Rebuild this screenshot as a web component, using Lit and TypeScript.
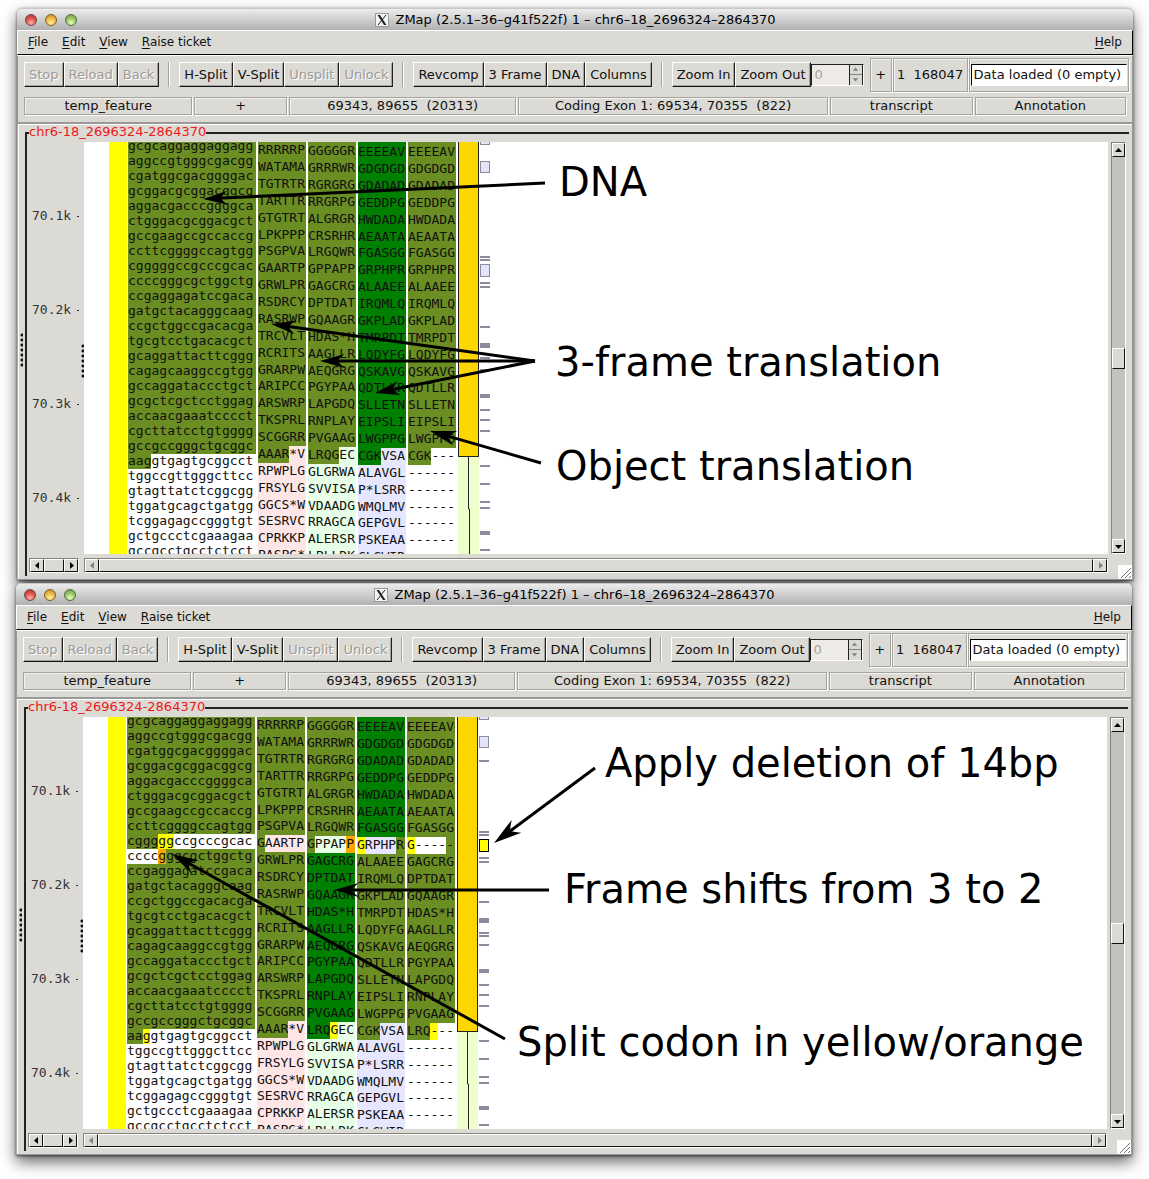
import { LitElement, html, svg, css } from "lit";
import { customElement, property } from "lit/decorators.js";
import { classMap } from "lit/directives/class-map.js";
import { styleMap } from "lit/directives/style-map.js";

type Run = [text: string, tone: string];
type Row = Run[];

const DNA = `gcgcaggaggaggagg aggccgtgggcgacgg cgatggcgacggggac gcggacgcggacggcg
aggacgacccggggca ctgggacgcggacgct gccgaagccgccaccg ccttcggggccagtgg cgggggccgcccgcac
ccccgggcgctggctg ccgaggagatccgaca gatgctacagggcaag ccgctggccgacacga tgcgtcctgacacgct
gcaggattacttcggg cagagcaaggccgtgg gccaggataccctgct gcgctcgctcctggag accaacgaaatcccct
cgcttatcctgtgggg gccgccgggctgcggc aaggtgagtgcggcct tggccgttgggcttcc gtagttatctcggcgg
tggatgcagctgatgg tcggagagccgggtgt gctgccctcgaaagaa gccgcctgcctctcct`.split(/\s+/);

const FRAME1 = `RRRRRP WATAMA TGTRTR TARTTR GTGTRT LPKPPP PSGPVA GAARTP GRWLPR RSDRCY
RASRWP TRCVLT RCRITS GRARPW ARIPCC ARSWRP TKSPRL SCGGRR AAAR*V RPWPLG FRSYLG GGCS*W
SESRVC CPRKKP PASPG*`.split(/\s+/);

const FRAME2 = `GGGGGR GRRRWR RGRGRG RRGRPG ALGRGR CRSRHR LRGQWR GPPAPP GAGCRG DPTDAT
GQAAGR HDAS*H AAGLLR AEQGRG PGYPAA LAPGDQ RNPLAY PVGAAG LRQGEC GLGRWA SVVISA VDAADG
RRAGCA ALERSR LPLLDK`.split(/\s+/);

const FRAME3 = `EEEEAV GDGDGD GDADAD GEDDPG HWDADA AEAATA FGASGG GRPHPR ALAAEE IRQMLQ
GKPLAD TMRPDT LQDYFG QSKAVG QDTLLR SLLETN EIPSLI LWGPPG CGKVSA ALAVGL P*LSRR WMQLMV
GEPGVL PSKEAA CLSWIR`.split(/\s+/);

const GAP_ROW = "------";

/** Gives rows[from..to) one tone each; overrides hold rows that mix tones. */
function paint(
  texts: string[],
  tones: [until: number, tone: string][],
  overrides: Record<number, Row> = {},
): Row[] {
  return texts.map((text, i) => {
    if (overrides[i]) return overrides[i];
    const tone = tones.find(([until]) => i < until)![1];
    return [[text, tone]];
  });
}

interface Track {
  kind: string;
  rows: Row[];
}

const BEFORE: Track[] = [
  { kind: "dna", rows: paint(DNA, [[21, "exon"], [99, "plain"]], { 21: [["aag", "exon"], ["gtgagtgcggcct", "plain"]] }) },
  { kind: "pep f1", rows: paint(FRAME1, [[18, "exon"], [99, "rose"]], { 18: [["AAAR", "exon"], ["*V", "rose"]] }) },
  { kind: "pep f2", rows: paint(FRAME2, [[18, "exon"], [99, "mint"]], { 18: [["LRQG", "exon"], ["EC", "mint"]] }) },
  { kind: "pep f3", rows: paint(FRAME3, [[18, "coding"], [99, "lilac"]], { 18: [["CGK", "coding"], ["VSA", "lilac"]] }) },
  {
    kind: "pep f3",
    rows: paint([...FRAME3.slice(0, 19), ...Array(6).fill(GAP_ROW)], [[18, "exon"], [99, "plain"]], {
      18: [["CGK", "exon"], ["---", "plain"]],
    }),
  },
];

const AFTER: Track[] = [
  {
    kind: "dna",
    rows: paint(DNA, [[21, "exon"], [99, "plain"]], {
      8: [["cggg", "exon"], ["gg", "split"], ["ccgcccgcac", "plain"]],
      9: [["cccc", "plain"], ["g", "splice"], ["ggcgctggctg", "exon"]],
      21: [["aa", "exon"], ["g", "split"], ["gtgagtgcggcct", "plain"]],
    }),
  },
  {
    kind: "pep f1",
    rows: paint(FRAME1, [[18, "exon"], [99, "rose"]], {
      7: [["G", "exon"], ["AARTP", "rose"]],
      18: [["AAAR", "exon"], ["*V", "rose"]],
    }),
  },
  {
    kind: "pep f2",
    rows: paint(FRAME2, [[7, "exon"], [18, "coding"], [99, "mint"]], {
      7: [["G", "exon"], ["PPAP", "mint"], ["P", "splice"]],
      18: [["LRQ", "coding"], ["G", "split"], ["EC", "mint"]],
    }),
  },
  {
    kind: "pep f3",
    rows: paint(FRAME3, [[7, "coding"], [18, "exon"], [99, "lilac"]], {
      7: [["G", "split"], ["RPHP", "lilac"], ["R", "exon"]],
      18: [["CGK", "exon"], ["VSA", "lilac"]],
    }),
  },
  {
    kind: "pep f3",
    rows: paint(
      [...FRAME3.slice(0, 8), ...FRAME2.slice(8, 19), ...Array(6).fill(GAP_ROW)],
      [[18, "exon"], [99, "plain"]],
      {
        7: [["G", "split"], ["----", "plain"], ["-", "exon"]],
        18: [["LRQ", "exon"], ["-", "split"], ["--", "plain"]],
      },
    ),
  },
];

/** Variation features: offset from the top of the view and height. */
const VARIANTS: [top: number, height: number][] = [
  [-4, 7], [19, 12], [43, 2], [114, 2], [117, 2], [122, 13], [140, 2], [144, 2], [184, 2],
  [201, 5], [215, 2], [218, 2], [227, 2], [252, 4], [267, 2], [277, 2], [288, 2], [323, 2],
  [341, 2], [359, 2], [365, 2], [389, 4], [407, 2],
];

@customElement("sequence-view")
class SequenceView extends LitElement {
  @property({ attribute: false }) tracks: Track[] = [];
  @property({ type: Boolean }) deletion = false;

  static styles = css`
    :host {
      display: flex;
      align-items: flex-start;
      height: 412px;
      overflow: hidden;
      background: #fff;
      padding-left: 25px;
      font: 13px/15px "DejaVu Sans Mono", monospace;
      color: #111;
      position: relative;
      box-sizing: border-box;
    }
    .clone { width: 18px; height: 100%; background: #ff0; margin-right: 1px; flex: none; }
    .track { flex: none; margin-right: 2px; }
    .dna { width: 128px; margin-top: -3px; }
    .dna .row { height: 15px; line-height: 13px; }
    .pep { width: 48px; }
    .pep .row { height: 17px; line-height: 15px; }
    .pep .row:nth-child(8n + 6) { height: 16px; }
    .f2 .row:first-child .run { padding-top: 1px; }
    .f3 .row:first-child .run { padding-top: 2px; }
    .pep.f2 .row:first-child { height: 18px; }
    .pep.f3 .row:first-child { height: 19px; }
    .row { display: flex; }
    .run { flex: none; white-space: pre; box-sizing: border-box; }
    .run:last-child { flex: 1; }
    .exon { background: #6b8e23; }
    .coding { background: #008000; }
    .plain { background: #fff; }
    .rose { background: #ffe6e6; }
    .mint { background: #e6ffe6; }
    .lilac { background: #e6e6ff; }
    .split { background: #ff0; }
    .splice { background: #ffa500; }
    .transcript { width: 21px; height: 100%; flex: none; margin-right: 1px; display: flex; flex-direction: column; background: #eeffcc; }
    .exon-box { height: 315px; box-sizing: border-box; background: #ffd700; border: 1px solid #222; border-top: 0; }
    .intron { flex: 1; width: 100%; }
    .variants { width: 10px; height: 100%; position: relative; flex: none; }
    .variant { position: absolute; left: 0; width: 10px; box-sizing: border-box; border: 1px solid #8c8c9c; background: #e4e4f8; }
    .solid { background: #8c8c9c; }
    .deleted { border-color: #000; background: #ff0; }
  `;

  render() {
    return html`
      <div class="clone"></div>
      ${this.tracks.map(
        (t) => html`<div class="track ${t.kind}">
          ${t.rows.map(
            (row) => html`<div class="row">${row.map(([text, tone]) => html`<span class="run ${tone}">${text}</span>`)}</div>`,
          )}
        </div>`,
      )}
      <div class="transcript">
        <div class="exon-box"></div>
        <svg class="intron" viewBox="0 0 21 97" preserveAspectRatio="none" aria-hidden="true">
          <path d="M10.5 0V52H11.5V97" fill="none" stroke="#222" />
        </svg>
      </div>
      <div class="variants">
        ${VARIANTS.map(
          ([top, height]) => html`<div
            class=${classMap({ variant: true, solid: height <= 5, deleted: this.deletion && top === 122 })}
            style=${styleMap({ top: `${top}px`, height: `${height}px` })}
          ></div>`,
        )}
      </div>
    `;
  }
}

const arrow = (dir: string) => {
  const d: Record<string, string> = {
    left: "M6 1V8L2 4.5Z",
    right: "M3 1V8L7 4.5Z",
    up: "M1 6H8L4.5 2Z",
    down: "M1 3H8L4.5 7Z",
  };
  return html`<svg class="glyph" viewBox="0 0 9 9" aria-hidden="true"><path d=${d[dir]} fill="currentColor" /></svg>`;
};

@customElement("zmap-window")
class ZmapWindow extends LitElement {
  @property({ attribute: false }) tracks: Track[] = [];
  @property({ type: Boolean }) deletion = false;

  static styles = css`
    :host {
      display: block;
      position: relative;
      background: #dcdad5;
      border-radius: 5px 5px 0 0;
      box-shadow: 0 7px 15px rgba(0, 0, 0, 0.6), 0 1px 3px rgba(0, 0, 0, 0.6);
      font: 13px/16px "DejaVu Sans", sans-serif;
      color: #111;
    }
    button, input { font: inherit; color: inherit; margin: 0; box-sizing: border-box; border-radius: 0; }
    button { padding: 0; background: #dcdad5; border: 0; white-space: nowrap; }
    .title {
      height: 22px;
      display: flex;
      align-items: center;
      background: linear-gradient(#ececec, #cfcfcf 50%, #b0b0b0);
      border-radius: 5px 5px 0 0;
      border-top: 1px solid #c8c8c8;
      box-sizing: border-box;
      padding: 0 8px;
    }
    .lights { display: flex; gap: 8px; flex: 1; }
    .light { width: 12px; height: 12px; border-radius: 50%; border: 1px solid #6b4a44; box-sizing: border-box; }
    .close { background: radial-gradient(circle at 50% 80%, #ffb3a8, #e0554c 50%, #b0302c); }
    .min { background: radial-gradient(circle at 50% 80%, #fff0a0, #f0bb48 50%, #c08424); border-color: #7d5f2c; }
    .max { background: radial-gradient(circle at 50% 80%, #e8ffc0, #9cc868 50%, #6a983c); border-color: #52703a; }
    .caption { display: flex; align-items: center; gap: 7px; color: #000; white-space: nowrap; }
    .xicon { width: 14px; height: 14px; display: block; }
    .spacer { flex: 1; }
    .menu { height: 25px; box-sizing: border-box; display: flex; align-items: center; gap: 14px; padding: 0 10px 0 9px; border-top: 1px solid #fff; border-left: 1px solid #fff; border-bottom: 1px solid #000; border-right: 1px solid #000; }
    .menu { padding: 0 10px 2px; }
    .menu button { line-height: 20px; font-size: 12px; }
    .u { text-decoration: underline; text-underline-offset: 2px; }
    .tools { height: 38px; box-sizing: border-box; display: flex; align-items: center; padding: 0 3px 0 6px; border-top: 1px solid #fff; border-left: 1px solid #999; border-right: 1px solid #999; }
    .group { display: flex; }
    .group button { height: 25px; padding: 0 4px; border: 1px solid; border-color: #fff #222 #111 #fff; box-shadow: inset -1px -1px #a5a39d; font-size: 13px; }
    .group button:disabled { color: #9c9a95; text-shadow: 1px 1px #fff; }
    .sep { width: 2px; height: 25px; margin: 0 9px; box-sizing: border-box; border-left: 1px solid #a5a39d; border-right: 1px solid #fff; }
    .spin { display: flex; width: 53px; height: 22px; box-sizing: border-box; border: 1px solid; border-color: #222 #fff #fff #222; margin-right: 6px; background: #eeebe7; }
    .spin input { flex: 1; min-width: 0; border: 0; padding: 0 3px; background: transparent; color: #a5a39e; appearance: textfield; -moz-appearance: textfield; }
    .spin input::-webkit-inner-spin-button { appearance: none; -webkit-appearance: none; margin: 0; }
    .steps { width: 12px; display: flex; flex-direction: column; border-left: 1px solid #222; border-right: 1px solid #222; background: #dcdad5; color: #85837e; }
    .steps span { flex: 1; display: flex; align-items: center; justify-content: center; }
    .steps span + span { border-top: 1px solid #85837e; }
    .steps .glyph { width: 7px; height: 7px; }
    .frame { box-sizing: border-box; border: 1px solid #a5a39d; box-shadow: inset 1px 1px #f4f3f0, 1px 1px #fff; display: flex; align-items: center; justify-content: center; white-space: pre; }
    .tools .frame { height: 34px; margin-right: 1px; }
    .strand { width: 22px; }
    .range { width: 75px; }
    .tools .status { flex: 1; min-width: 0; padding: 0 1px; margin-right: 0; }
    .status input { width: 100%; height: 22px; padding: 0 2px; border: 1px solid; border-color: #000 #fff #fff #000; background: #fff; }
    .info { height: 30px; box-sizing: border-box; padding: 4px 6px 7px 6px; display: grid; grid-template-columns: 169fr 93fr 228fr 311fr 143fr 152fr; gap: 2px; border: 1px solid #999; border-top: 0; }
    .info .frame { height: 18px; }
    .body { display: flex; align-items: stretch; padding: 0 3px 3px 0; border: 1px solid #999; border-left: 1px solid #aaa; box-shadow: inset 1px 1px #fff; }
    .grip { display: flex; flex-direction: column; justify-content: center; align-items: center; width: 7px; }
    .grip::after { content: ""; width: 3px; height: 35px; background: radial-gradient(circle at 2px 2px, #111 1px, transparent 2px) 0 0 / 3px 5px; }
    fieldset { flex: 1; min-width: 0; margin: 0; padding: 0 3px 0 0; border: 0 solid #222; border-width: 2px 0 0 2px; }
    legend { padding: 0 0 2px; margin-left: 2px; color: #f01818; line-height: 16px; }
    .panes { display: grid; grid-template-columns: 57px minmax(0, 1fr) 15px; row-gap: 4px; padding-bottom: 3px; }
    .ruler { display: flex; }
    .ticks { flex: 1; padding-top: 27px; height: 412px; box-sizing: border-box; overflow: hidden; font-family: "DejaVu Sans Mono", monospace; color: #333; }
    .tick { height: 94px; display: flex; align-items: center; padding-left: 5px; }
    .tick::after { content: ""; width: 2px; height: 1px; background: #333; margin-left: 6px; }
    .ruler .grip { width: 4px; padding-top: 26px; }
    sequence-view { margin-right: 3px; }
    .glyph { width: 9px; height: 9px; display: block; }
    .bar { display: flex; background: #c4c2bd; box-sizing: border-box; border: 1px solid; border-color: #85837e #fff #fff #85837e; }
    .bar button, .thumb { border: 1px solid; border-color: #fff #111 #111 #fff; box-sizing: border-box; background: #dcdad5; }
    .bar button { width: 14px; height: 13px; display: flex; align-items: center; justify-content: center; color: #000; }
    .bar button:disabled { color: #85837e; }
    .horizontal { height: 15px; }
    .horizontal .thumb { flex: 1; }
    .small { margin: 0 5px 0 2px; }
    .wide { margin-right: 3px; }
    .vertical { flex-direction: column; align-items: stretch; width: 15px; }
    .vertical button { width: 13px; height: 14px; }
    .before { flex: 192; }
    .after { flex: 171; }
    .vertical .thumb { height: 21px; }
    .resize { position: absolute; right: 1px; bottom: 1px; width: 14px; height: 14px; }
  `;

  private menuButton(label: string) {
    return html`<button type="button"><span class="u">${label[0]}</span>${label.slice(1)}</button>`;
  }

  private group(labels: string[], disabled: string[] = []) {
    return html`<div class="group">
      ${labels.map((l) => html`<button type="button" ?disabled=${disabled.includes(l)}>${l}</button>`)}
    </div>`;
  }

  render() {
    return html`
      <header class="title">
        <div class="lights"><span class="light close"></span><span class="light min"></span><span class="light max"></span></div>
        <div class="caption">
          <svg class="xicon" viewBox="0 0 14 14" aria-hidden="true">
            <rect x="0.5" y="0.5" width="13" height="13" fill="#f4f4f4" stroke="#999" />
            <path d="M2.5 2H5L11.5 12H9Z" fill="#222" />
            <path d="M11 2L3 12" stroke="#222" stroke-width="1" />
          </svg>
          <span>ZMap (2.5.1–36–g41f522f) 1 – chr6–18_2696324–2864370</span>
        </div>
        <div class="spacer"></div>
      </header>
      <nav class="menu">
        ${["File", "Edit", "View", "Raise ticket"].map((l) => this.menuButton(l))}
        <span class="spacer"></span>${this.menuButton("Help")}
      </nav>
      <div class="tools">
        ${this.group(["Stop", "Reload", "Back"], ["Stop", "Reload", "Back"])}
        <span class="sep"></span>
        ${this.group(["H-Split", "V-Split", "Unsplit", "Unlock"], ["Unsplit", "Unlock"])}
        <span class="sep"></span>
        ${this.group(["Revcomp", "3 Frame", "DNA", "Columns"])}
        <span class="sep"></span>
        ${this.group(["Zoom In", "Zoom Out"])}
        <div class="spin">
          <input type="number" aria-label="Filter" value="0" disabled />
          <div class="steps"><span>${arrow("up")}</span><span>${arrow("down")}</span></div>
        </div>
        <div class="frame strand">+</div>
        <div class="frame range">1  168047</div>
        <div class="frame status"><input type="text" aria-label="Status" .value=${"Data loaded (0 empty) (0 failed)"} /></div>
      </div>
      <div class="info">
        <div class="frame">temp_feature</div>
        <div class="frame">+</div>
        <div class="frame">69343, 89655  (20313)</div>
        <div class="frame">Coding Exon 1: 69534, 70355  (822)</div>
        <div class="frame">transcript</div>
        <div class="frame">Annotation</div>
      </div>
      <div class="body">
        <div class="grip"></div>
        <fieldset>
          <legend>chr6-18_2696324-2864370</legend>
          <div class="panes">
            <div class="ruler">
              <div class="ticks">
                ${["70.1k", "70.2k", "70.3k", "70.4k"].map((t) => html`<div class="tick">${t}</div>`)}
              </div>
              <div class="grip"></div>
            </div>
            <sequence-view .tracks=${this.tracks} ?deletion=${this.deletion}></sequence-view>
            <div class="bar vertical">
              <button type="button" aria-label="Scroll up">${arrow("up")}</button>
              <span class="before"></span><span class="thumb"></span><span class="after"></span>
              <button type="button" aria-label="Scroll down">${arrow("down")}</button>
            </div>
            <div class="bar horizontal small">
              <button type="button" aria-label="Scroll ruler left">${arrow("left")}</button>
              <span class="thumb"></span>
              <button type="button" aria-label="Scroll ruler right">${arrow("right")}</button>
            </div>
            <div class="bar horizontal wide">
              <button type="button" aria-label="Scroll left" disabled>${arrow("left")}</button>
              <span class="thumb"></span>
              <button type="button" aria-label="Scroll right" disabled>${arrow("right")}</button>
            </div>
          </div>
        </fieldset>
      </div>
      <svg class="resize" viewBox="0 0 14 14" aria-hidden="true">
        <rect width="14" height="14" fill="#fff" />
        <path d="M3 13L13 3M7 13L13 7M11 13L13 11" stroke="#777" />
      </svg>
    `;
  }
}

interface Pointer {
  from: [number, number];
  to: [number, number];
  scale: number;
}

const POINTERS: Pointer[] = [
  { from: [545, 183], to: [203, 199], scale: 1.4 },
  { from: [535, 361], to: [271, 324], scale: 1.4 },
  { from: [535, 361], to: [320, 361], scale: 1.4 },
  { from: [535, 361], to: [375, 393], scale: 1.4 },
  { from: [541, 463], to: [430, 431], scale: 1.5 },
  { from: [595, 768], to: [494, 843], scale: 1.6 },
  { from: [549, 890], to: [334, 890], scale: 1.4 },
  { from: [505, 1039], to: [172, 854], scale: 1.5 },
];

const NOTES: [x: number, y: number, text: string][] = [
  [559, 196, "DNA"],
  [555, 376, "3-frame translation"],
  [556, 480, "Object translation"],
  [605, 777, "Apply deletion of 14bp"],
  [564, 903, "Frame shifts from 3 to 2"],
  [517, 1056, "Split codon in yellow/orange"],
];

@customElement("app-root")
class AppRoot extends LitElement {
  static styles = css`
    :host { display: block; position: relative; background: #fff; padding: 8px 16px 24px; overflow: hidden; }
    .first { margin-left: 1px; }
    .second { margin: 3px 1px 0 0; }
    .notes { position: absolute; left: 0; top: 0; width: 100%; height: 100%; pointer-events: none; }
    .note { font: 40px "DejaVu Sans", sans-serif; fill: #000; }
    .shaft { stroke: #000; stroke-width: 3; }
  `;

  private pointer({ from, to, scale }: Pointer) {
    const dx = from[0] - to[0];
    const dy = from[1] - to[1];
    const len = Math.hypot(dx, dy);
    const start = 10 * scale;
    const angle = (Math.atan2(dy, dx) * 180) / Math.PI;
    return svg`
      <line class="shaft" x1=${from[0]} y1=${from[1]} x2=${to[0] + (dx / len) * start} y2=${to[1] + (dy / len) * start} />
      <path transform="translate(${to[0]} ${to[1]}) rotate(${angle}) scale(${scale})" d="M0 0L17.5 -5Q14.5 -2.5 12.5 0Q14.5 2.5 17.5 5Z" />`;
  }

  render() {
    return html`
      <zmap-window class="first" .tracks=${BEFORE}></zmap-window>
      <zmap-window class="second" .tracks=${AFTER} deletion></zmap-window>
      <svg class="notes">
        ${POINTERS.map((p) => this.pointer(p))}
        ${NOTES.map(([x, y, text]) => svg`<text class="note" x=${x} y=${y}>${text}</text>`)}
      </svg>
    `;
  }
}
